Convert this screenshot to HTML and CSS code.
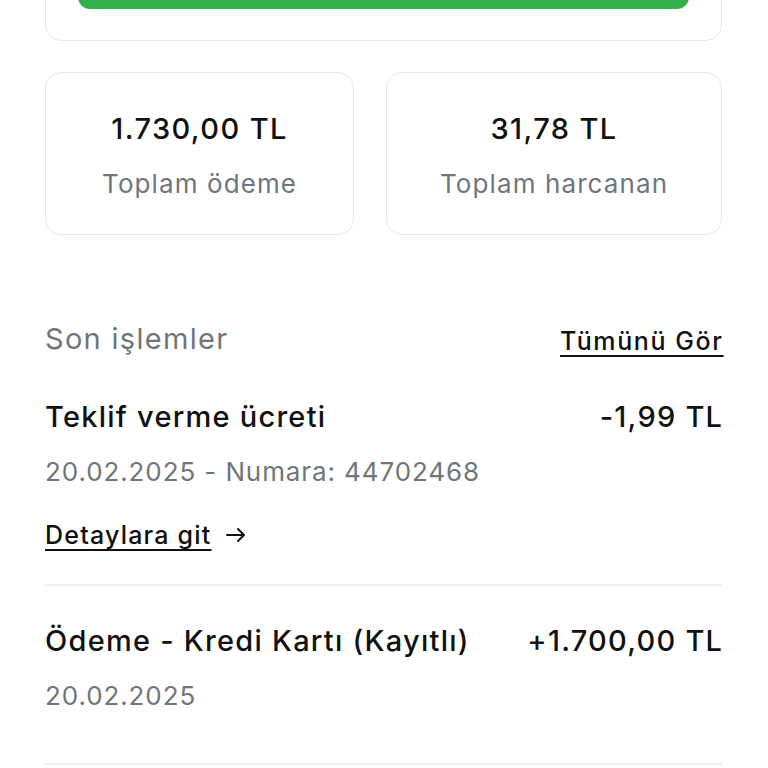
FILE: index.html
```html
<html>

<head>
    <title>Cüzdan</title>
    <link rel="stylesheet" href="styles.css">
</head>

<body>
    <main class="page">
        <section class="top-card">
            <div class="btn-green"></div>
        </section>

        <section class="stats">
            <div class="stat">
                <div class="stat-value">1.730,00 TL</div>
                <div class="stat-label">Toplam ödeme</div>
            </div>
            <div class="stat">
                <div class="stat-value">31,78 TL</div>
                <div class="stat-label">Toplam harcanan</div>
            </div>
        </section>

        <section class="history">
            <div class="history-head">
                <h2>Son işlemler</h2>
                <a href="#" class="see-all">Tümünü Gör</a>
            </div>

            <div class="tx">
                <div class="tx-row">
                    <span class="tx-title">Teklif verme ücreti</span>
                    <span class="tx-amount">-1,99 TL</span>
                </div>
                <div class="tx-meta">20.02.2025 - Numara: 44702468</div>
                <a href="#" class="tx-link">
                    <span>Detaylara git</span>
                    <svg width="22" height="20" viewBox="0 0 22 20" fill="none" stroke="#111" stroke-width="2" stroke-linecap="round" stroke-linejoin="round">
                        <path d="M2 10h17M13 4l6 6-6 6" />
                    </svg>
                </a>
            </div>

            <div class="tx">
                <div class="tx-row">
                    <span class="tx-title">Ödeme - Kredi Kartı (Kayıtlı)</span>
                    <span class="tx-amount">+1.700,00 TL</span>
                </div>
                <div class="tx-meta">20.02.2025</div>
            </div>
        </section>
    </main>
</body>

</html>
```

FILE: styles.css
```css
body {
    margin: 0;
    background: #fff;
    color: #111;
    font-family: Inter, Roboto, sans-serif;
}

.page {
    padding: 0 46px 0 45px;
}

/* card that is mostly scrolled off the top */
.top-card {
    margin-top: -60px;
    padding: 18px 32px 31px 32px;
    border: 1.5px solid #e8e8e8;
    border-radius: 16px;
}

.btn-green {
    height: 50px;
    border-radius: 12px;
    background: #33b04c;
}

.stats {
    display: flex;
    gap: 32px;
    margin-top: 31px;
}

.stat {
    flex: 1 1 auto;
    height: 163px;
    border: 1.5px solid #e8e8e8;
    border-radius: 16px;
    display: flex;
    flex-direction: column;
    align-items: center;
    padding-top: 38px;
    box-sizing: border-box;
}

.stat:first-child {
    flex-grow: 1.06;
}

.stat-value {
    font-size: 29px;
    font-weight: 500;
    line-height: 36px;
    letter-spacing: 1.4px;
}

.stat-label {
    margin-top: 20px;
    font-size: 26px;
    color: #70757a;
    line-height: 34px;
    letter-spacing: 1.1px;
}

.history {
    margin-top: 84px;
}

.history-head {
    display: flex;
    justify-content: space-between;
    align-items: center;
}

.history-head h2 {
    margin: 0;
    font-size: 29px;
    font-weight: 400;
    color: #70757a;
    line-height: 40px;
    letter-spacing: 1.3px;
}

.see-all {
    color: #111;
    font-size: 25px;
    font-weight: 500;
    letter-spacing: 1.6px;
    margin-right: -1.6px;
    text-decoration: underline;
    text-decoration-thickness: 2px;
    text-underline-offset: 5px;
    margin-top: 4px;
}

.tx {
    border-bottom: 2px solid #efefef;
    padding: 38px 0 33px;
}

.tx + .tx {
    padding-top: 35px;
    padding-bottom: 51px;
}

.tx-row {
    display: flex;
    justify-content: space-between;
    align-items: center;
    font-size: 29px;
    font-weight: 500;
    line-height: 40px;
    letter-spacing: 1.25px;
}

.tx-amount {
    margin-right: -1.25px;
}

.tx-meta {
    margin-top: 19px;
    font-size: 26px;
    color: #70757a;
    line-height: 32px;
    letter-spacing: 0.9px;
}

.tx-link {
    display: inline-flex;
    align-items: center;
    gap: 14px;
    margin-top: 31px;
    color: #111;
    font-size: 25px;
    font-weight: 500;
    line-height: 32px;
    letter-spacing: 1.2px;
    text-decoration: none;
}

.tx-link span {
    text-decoration: underline;
    text-decoration-thickness: 2px;
    text-underline-offset: 5px;
}
```
